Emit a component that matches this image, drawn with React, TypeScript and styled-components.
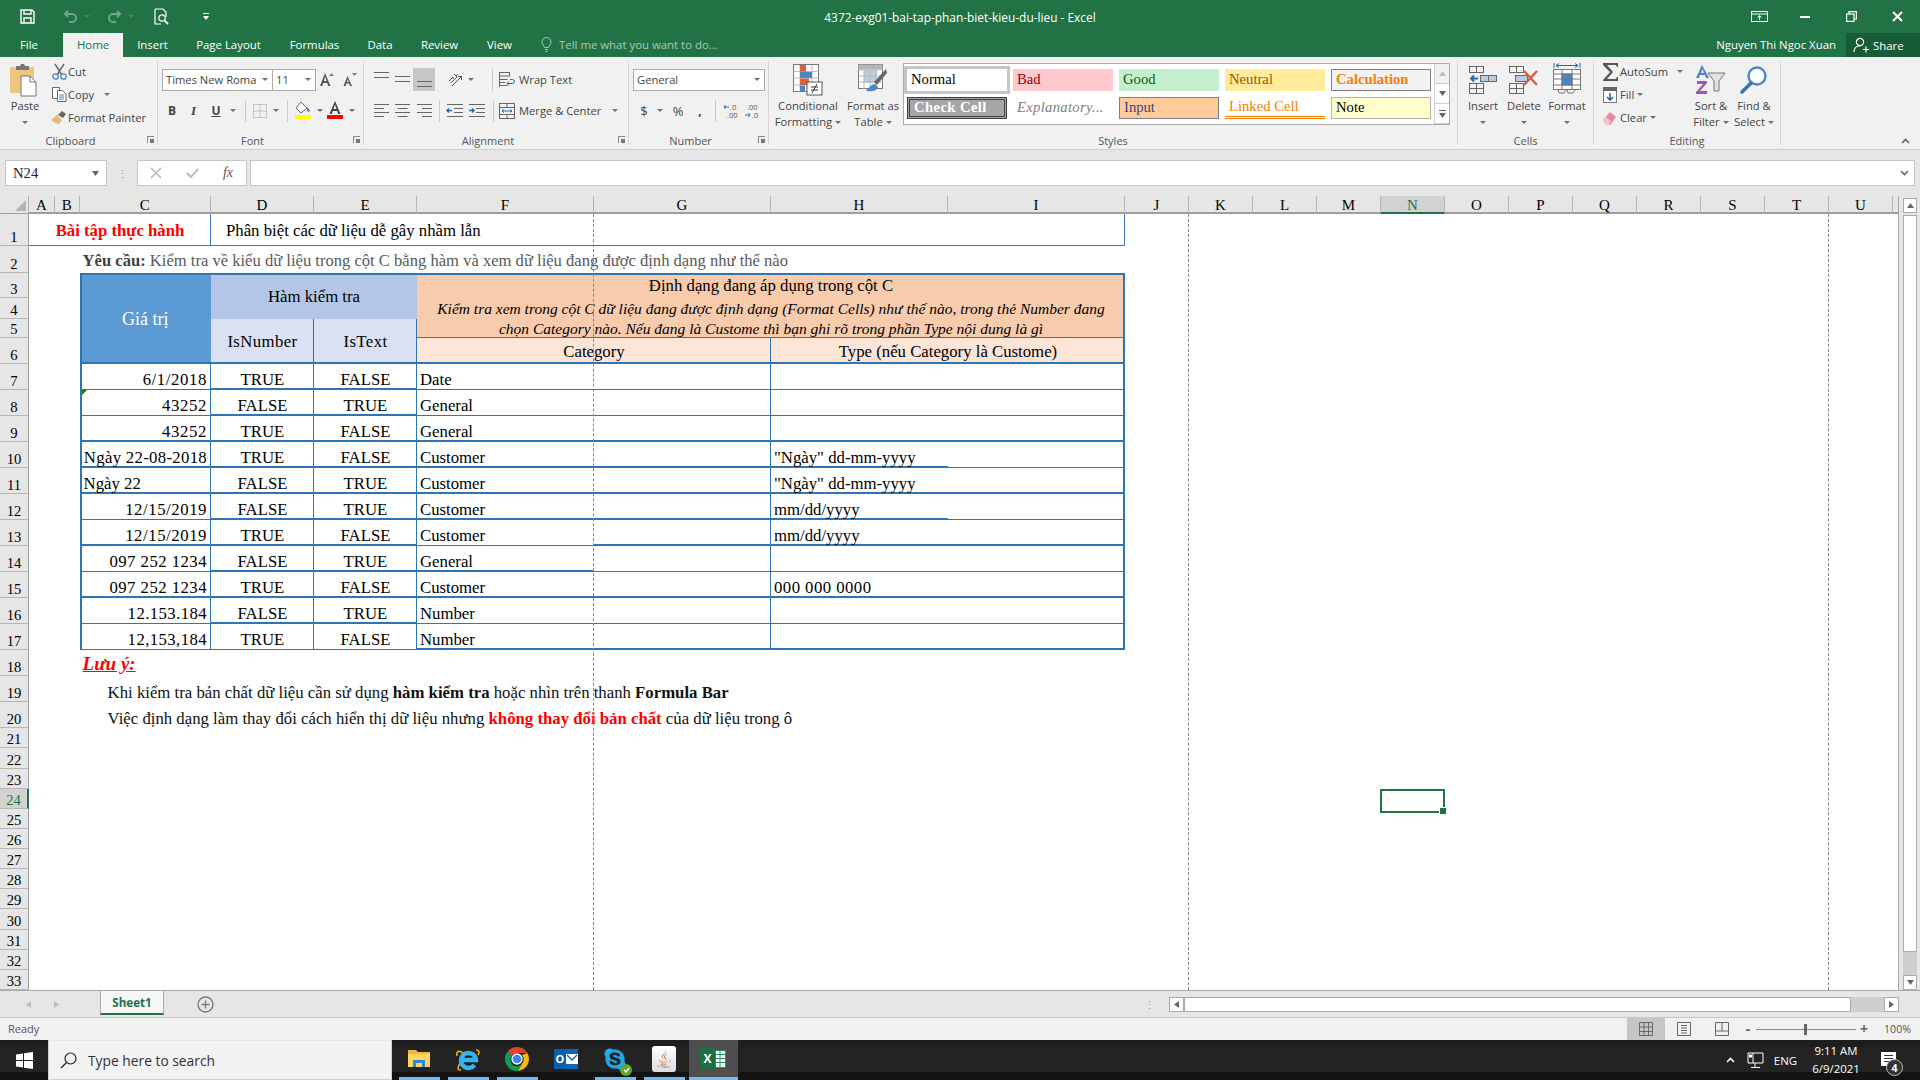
import React from 'react';
import styled, { createGlobalStyle } from 'styled-components';
import { FaSkype, FaJava } from 'react-icons/fa';

const UI = `"Open Sans", "Noto Sans", sans-serif`;
const SERIF = `"Liberation Serif", "Times New Roman", serif`;
const GREEN = '#217346';
const BLUE = '#2e75b6';

const Global = createGlobalStyle`
  html, body { margin: 0; width: 1920px; height: 1080px; overflow: hidden; background: #fff; }
  * { box-sizing: border-box; }
  svg { display: block; overflow: visible; }
`;

const Page = styled.div`
  width: 1920px; height: 1080px; display: flex; flex-direction: column;
  font-family: ${UI}; font-size: 11.2px; color: #444;
`;

/* ---------- title bar ---------- */
const TitleBar = styled.div`
  height: 33px; background: ${GREEN}; display: grid; grid-template-columns: 1fr auto 1fr; align-items: center; color: #fff;
`;
const Qat = styled.div`display: flex; align-items: center; padding-left: 16px;`;
const Slot = styled.div<{ $w: number; $on?: boolean }>`
  width: ${p => p.$w}px; flex: none; display: flex; align-items: center; justify-content: center;
  ${p => p.$on ? 'background:#c6c6c6; height:23px;' : ''}
`;
const WindowTitle = styled.div`font-size: 11.9px;`;
const WinBtns = styled.div`display: flex; justify-content: flex-end; align-items: center;`;

const TabsBar = styled.div`height: 24px; background: ${GREEN}; display: flex; color: #fff; font-size: 11.4px;`;
const Tab = styled.div<{ $w: number; $active?: boolean }>`
  width: ${p => p.$w}px; display: flex; align-items: center; justify-content: center; padding-bottom: 1px;
  ${p => p.$active ? `background:#f1f1f1; color:${GREEN};` : ''}
`;
const TellMe = styled.div`margin-left: 15px; display: flex; align-items: center; gap: 7px; color: #a6c9b6; padding-bottom: 1px;`;
const TabsRight = styled.div`margin-left: auto; display: flex; align-items: center;`;
const UserName = styled.div`margin-right: 10px; padding-bottom: 1px;`;
const ShareBtn = styled.div`
  width: 74px; height: 24px; background: #185c37; display: flex; align-items: center; padding-left: 7px; gap: 4px;
`;

/* ---------- ribbon ---------- */
const Ribbon = styled.div`height: 93px; background: #f1f1f1; display: flex; border-bottom: 1px solid #cfcfcf;`;
const Group = styled.div<{ $w: number }>`
  width: ${p => p.$w}px; flex: none; height: 84px; margin-top: 4px; border-right: 1px solid #d4d4d4; display: flex; flex-direction: column;
`;
const GroupBody = styled.div<{ $pl?: number }>`flex: 1; display: flex; padding-left: ${p => p.$pl ?? 0}px; min-height: 0;`;
const GroupFoot = styled.div<{ $launch?: boolean }>`
  height: 14px; flex: none; display: flex; align-items: center; justify-content: center; position: relative; color: #555; font-size: 11px;
  margin-bottom: -2px; padding-right: ${p => p.$launch ? 16 : 0}px;
`;
const Launcher = styled.div`
  position: absolute; right: 3px; top: 3px; width: 7px; height: 7px; border: 1px solid #8a8a8a; border-width: 1px 0 0 1px;
  &::after { content: ''; position: absolute; right: 0; bottom: 0; width: 4px; height: 4px; background: #777; }
`;
const Large = styled.div<{ $w: number }>`width: ${p => p.$w}px; flex: none; display: flex; flex-direction: column; align-items: center;`;
const LargeIcon = styled.div`height: 37px; display: flex; align-items: center; justify-content: center;`;
const LargeText = styled.div`line-height: 16px; height: 16px; display: flex; align-items: center; gap: 3px; white-space: nowrap;`;
const Caret = styled.span`
  display: inline-block; flex: none; width: 0; height: 0; border-left: 3px solid transparent; border-right: 3px solid transparent; border-top: 3px solid #6f6f6f;
`;
const SmallCol = styled.div<{ $w?: number }>`${p => p.$w ? `width:${p.$w}px;flex:none;` : ''} display: flex; flex-direction: column; margin-top: -1px;`;
const SmallRow = styled.div`height: 23px; display: flex; align-items: center; white-space: nowrap;`;
const Gap = styled.span<{ $w: number }>`display: block; flex: none; width: ${p => p.$w}px;`;
const TwoRows = styled.div`display: flex; flex-direction: column; padding-top: 7px;`;
const ToolRow = styled.div`height: 23px; display: flex; align-items: center; margin-bottom: 8px; white-space: nowrap;`;
const Combo = styled.div<{ $w: number }>`
  width: ${p => p.$w}px; height: 22px; flex: none; background: #fff; border: 1px solid #ababab; display: flex; align-items: center; justify-content: space-between; padding: 0 4px 0 3px; margin-right: -1px;
`;
const Sep = styled.div`width: 1px; height: 22px; background: #c8c8c8;`;
const BoldMark = styled.span`font-weight: 700; font-size: 12px; color: #444;`;
const PlainMark = styled.span`font-size: 13px; color: #444;`;
const ItalicMark = styled.span`font-family: ${SERIF}; font-style: italic; font-weight: 700; font-size: 13px;`;
const UnderMark = styled.span`font-weight: 700; font-size: 12px; text-decoration: underline;`;

const Gallery = styled.div`
  width: 547px; height: 62px; margin: 2px 0 0 -1px; display: flex; border: 1px solid #ababab; background: #fff; flex: none;
`;
const StyleGrid = styled.div`
  width: 531px; display: grid; grid-template-columns: repeat(5, 100px); grid-template-rows: 22px 22px; gap: 6px; padding: 5px 0 0 3px;
`;
const StyleCell = styled.div<{ $bg?: string; $fg: string; $bold?: boolean; $it?: boolean; $border?: string; $extra?: string }>`
  background: ${p => p.$bg ?? '#fff'}; color: ${p => p.$fg}; font-family: ${SERIF}; font-size: 14.67px; padding-bottom: 1px;
  font-weight: ${p => p.$bold ? 700 : 400}; font-style: ${p => p.$it ? 'italic' : 'normal'};
  ${p => p.$border ? `border:${p.$border};` : ''} display: flex; align-items: center; padding-left: 4px; ${p => p.$extra ?? ''}
`;
const GalleryScroll = styled.div`width: 15px; margin-left: auto; display: flex; flex-direction: column; border-left: 1px solid #d0d0d0;`;
const GalleryBtn = styled.div<{ $bg?: string }>`
  flex: 1; background: ${p => p.$bg ?? '#fff'}; display: flex; align-items: center; justify-content: center; border-bottom: 1px solid #d0d0d0;
`;
const CollapseArea = styled.div`flex: 1; display: flex; align-items: flex-end; justify-content: flex-end; padding: 0 10px 5px 0;`;

/* ---------- formula bar ---------- */
const FormulaZone = styled.div`height: 46px; background: #e6e6e6; padding-top: 10px; display: flex; align-items: flex-start;`;
const NameBox = styled.div`
  margin-left: 5px; width: 102px; height: 26px; background: #fff; border: 1px solid #c6c6c6; display: flex; align-items: center; justify-content: space-between; padding: 0 7px;
  font-family: ${SERIF}; font-size: 14.67px; color: #222;
`;
const Dots = styled.div`width: 30px; height: 26px; display: flex; align-items: center; justify-content: center; color: #999;`;
const FxBox = styled.div`
  width: 110px; height: 26px; background: #fff; border: 1px solid #c6c6c6; display: flex; align-items: center; color: #aaa;
`;
const FxMark = styled.span`font-family: ${SERIF}; font-style: italic; font-size: 14px; color: #555;`;
const FormulaInput = styled.div`
  flex: 1; margin: 0 5px 0 3px; height: 26px; background: #fff; border: 1px solid #c6c6c6; display: flex; align-items: center; justify-content: flex-end; padding-right: 5px;
`;

/* ---------- sheet ---------- */
const SheetArea = styled.div`height: 794px; display: flex; background: #e6e6e6;`;
const rowHeights = [18, 32, 26.7, 25.6, 20.3, 19.7, 26, ...Array(14).fill(26), ...Array(13).fill(20.13)];
const SheetGrid = styled.div`
  width: 1899px; height: 794px; position: relative; background: #fff; overflow: hidden; border-right: 1px solid #a8a8a8;
  display: grid; font-family: ${SERIF}; font-size: 16.75px; color: #000; line-height: 20px;
  grid-template-columns: 29px 26px 24.6px 131.4px 103px 103px 177px 177px 177px 177px repeat(12, 64px) 6px;
  grid-template-rows: ${rowHeights.map(h => h + 'px').join(' ')};
`;
const Corner = styled.div`
  grid-column: 1; grid-row: 1; background: #e6e6e6; border-right: 1px solid #b0b0b0; border-bottom: 1px solid #9e9e9e; position: relative;
  &::after { content: ''; position: absolute; right: 2px; bottom: 2px; border-left: 11px solid transparent; border-bottom: 11px solid #b4b4b4; }
`;
const ColHead = styled.div<{ $c: number; $sel?: boolean }>`
  grid-column: ${p => p.$c}; grid-row: 1; display: flex; align-items: center; justify-content: center; padding-top: 1px; font-size: 15px;
  background: ${p => p.$sel ? '#d2d2d2' : '#e6e6e6'}; color: ${p => p.$sel ? GREEN : '#000'};
  border-right: 1px solid #b5b5b5; border-bottom: ${p => p.$sel ? `2px solid ${GREEN}` : '2px solid #9e9e9e'};
`;
const RowHead = styled.div<{ $r: number; $sel?: boolean }>`
  grid-column: 1; grid-row: ${p => p.$r}; display: flex; align-items: flex-end; justify-content: center; font-size: 14.67px; line-height: 15px;
  background: ${p => p.$sel ? '#d2d2d2' : '#e6e6e6'}; color: ${p => p.$sel ? GREEN : '#000'};
  border-bottom: 1px solid #b5b5b5; border-right: ${p => p.$sel ? `2px solid ${GREEN}` : '1px solid #9e9e9e'};
`;
type CellP = {
  $c: number; $r: number; $cs?: number; $rs?: number; $bg?: string; $fg?: string; $align?: string; $v?: string; $ls?: number; $fs?: number;
  $b?: number; $rt?: number; $lf?: number; $tp?: number; $pad?: string; $edge?: string; $bold?: boolean;
};
const Cell = styled.div<CellP>`
  grid-column: ${p => p.$c} / span ${p => p.$cs ?? 1}; grid-row: ${p => p.$r} / span ${p => p.$rs ?? 1};
  background: ${p => p.$bg ?? 'transparent'}; color: ${p => p.$fg ?? '#000'}; font-weight: ${p => p.$bold ? 700 : 400};
  display: flex; align-items: ${p => p.$v ?? 'center'}; justify-content: ${p => p.$align ?? 'center'};
  letter-spacing: ${p => p.$ls ?? 0}px; ${p => p.$fs ? `font-size:${p.$fs}px;` : ''}
  text-align: center; padding: ${p => p.$pad ?? (p.$v ? '0' : '2px 0 0')}; white-space: nowrap; position: relative;
  box-shadow: inset 0 ${p => -(p.$b ?? 0)}px 0 ${p => p.$edge ?? BLUE}, inset ${p => -(p.$rt ?? 0)}px 0 0 ${p => p.$edge ?? BLUE},
    inset ${p => p.$lf ?? 0}px 0 0 ${BLUE}, inset 0 ${p => p.$tp ?? 0}px 0 ${BLUE};
`;
const HeaderNote = styled.div`font-style: italic; font-size: 15.5px; line-height: 20px; text-align: center; width: 100%;`;
const Flag = styled.div`
  position: absolute; left: 2px; top: 0; width: 0; height: 0; border-top: 5px solid #107c10; border-right: 5px solid transparent;
`;
const Strong = styled.b<{ $fg?: string }>`color: ${p => p.$fg ?? 'inherit'};`;
const Warn = styled.span`color: #ff0000; font-weight: 700; font-style: italic; text-decoration: underline; font-size: 19px;`;
const Line = styled.div<{ $c: number; $r: number; $v?: string }>`
  grid-column: ${p => p.$c} / span 12; grid-row: ${p => p.$r}; display: flex; align-items: ${p => p.$v ?? 'flex-end'}; white-space: nowrap; padding-left: 3px; color: #111;
  margin-bottom: -1px;
`;
const Requirement = styled(Line)`color: #595959; font-size: 16.58px; padding-top: 3px; margin-bottom: 0;`;
const WarnLine = styled(Line)`padding-top: 2px; margin-bottom: 0;`;
const PageBreak = styled.div<{ $x: number }>`
  position: absolute; top: 18px; bottom: 0; left: ${p => p.$x}px; width: 0; border-left: 1px dashed #858585; pointer-events: none;
`;
const Selection = styled.div`
  grid-column: 15; grid-row: 25; margin: 0 0 -4px -1px; border: 2px solid ${GREEN}; position: relative;
  &::after { content: ''; position: absolute; right: -4px; bottom: -4px; width: 6px; height: 6px; background: ${GREEN}; border: 1px solid #fff; }
`;
const VScroll = styled.div`width: 21px; padding: 2px 3px 0 4px; display: flex; flex-direction: column;`;
const ScrollBtn = styled.div<{ $w?: number }>`
  height: 15px; ${p => p.$w ? `width:${p.$w}px;` : ''} flex: none; background: #fff; border: 1px solid #ababab; display: flex; align-items: center; justify-content: center;
`;
const VThumb = styled.div`height: 737px; margin-top: 2px; background: #fff; border: 1px solid #ababab; flex: none;`;
const VTrack = styled.div`flex: 1; background: #cfcfcf;`;

/* ---------- sheet tabs ---------- */
const TabsRow = styled.div`height: 28px; background: #e6e6e6; display: flex; border-top: 1px solid #ababab; border-bottom: 1px solid #c8c8c8;`;
const NavArrows = styled.div`width: 100px; display: flex; align-items: center; padding-left: 26px; gap: 23px;`;
const SheetTab = styled.div`
  width: 64px; height: 24px; background: #f6f6f6; border: 1px solid #ababab; border-top: 0; border-bottom: 2px solid ${GREEN}; color: ${GREEN}; font-weight: 700; font-size: 11.6px;
  display: flex; align-items: center; justify-content: center;
`;
const AddSheet = styled.div`margin-left: 33px; margin-top: 5px;`;
const HScrollZone = styled.div`margin-left: auto; display: flex; align-items: flex-start; padding: 6px 21px 0 0;`;
const HThumb = styled.div`width: 667px; height: 15px; background: #fff; border: 1px solid #ababab;`;
const HTrack = styled.div`width: 33px; height: 15px; background: #cfcfcf;`;
const SplitDots = styled.div`margin: 0 14px 0 0; color: #999; display: flex; align-items: center; height: 15px;`;

/* ---------- status ---------- */
const StatusBar = styled.div`height: 22px; background: #f1f1f1; display: flex; align-items: center; padding-left: 8px; font-size: 11px; color: #555;`;
const ReadyText = styled.span`padding-bottom: 2px;`;
const StatusRight = styled.div`margin-left: auto; display: flex; align-items: center; height: 22px; padding-right: 9px;`;
const ViewBtn = styled.div<{ $on?: boolean }>`
  width: 38px; height: 22px; display: flex; align-items: center; justify-content: center; background: ${p => p.$on ? '#c6c6c6' : 'transparent'};
`;
const Zoomer = styled.div`display: flex; align-items: center; margin-left: 1px;`;
const ZoomTrack = styled.div`
  width: 100px; height: 1px; background: #8a8a8a; margin: 0 2px; position: relative;
  &::after { content: ''; position: absolute; left: 48px; top: -5px; width: 3px; height: 11px; background: #666; }
`;
const ZoomSym = styled.span`font-size: 14px; font-weight: 700; color: #666; width: 12px; text-align: center; line-height: 14px;`;
const ZoomPct = styled.span`margin-left: 14px; color: #555; font-size: 10.6px;`;

/* ---------- taskbar ---------- */
const Taskbar = styled.div`
  height: 40px; display: flex; color: #fff;
  background: linear-gradient(#1d1d1d 0 7px, #232323 7px 32px, #131313 32px);
`;
const StartBtn = styled.div`width: 48px; display: flex; align-items: center; justify-content: center;`;
const SearchBox = styled.div`
  width: 344px; background: #f2f2f2; border: 1px solid #cfcfcf; border-top-color: #e8e8e8; display: flex; align-items: center; padding-left: 11px; gap: 11px;
  color: #333; font-size: 13.8px;
`;
const TaskItems = styled.div`display: flex; margin-left: 2.5px;`;
const TaskItem = styled.div<{ $run?: boolean; $active?: boolean }>`
  width: 49px; height: 40px; position: relative; display: flex; align-items: center; justify-content: center; padding-bottom: 3px;
  background: ${p => p.$active ? '#4e4e4e' : 'transparent'};
  ${p => p.$run ? `&::after { content:''; position:absolute; left:${p.$active ? 0 : 4}px; right:${p.$active ? 0 : 4}px; bottom:0; height:3px; background:#76b9ed; }` : ''}
`;
const Tray = styled.div`margin-left: auto; display: flex; align-items: center; height: 40px; font-size: 11.4px; padding-right: 19px;`;
const TrayText = styled.div`width: 33px; text-align: right;`;
const Clock = styled.div`width: 78px; text-align: center; line-height: 18px; font-size: 11.4px;`;
const Notify = styled.div`width: 26px; position: relative; display: flex; justify-content: center; align-self: flex-start; padding-top: 12px;`;
const NotifyBadge = styled.div`
  position: absolute; left: 11px; top: 19px; width: 17px; height: 17px; border-radius: 50%; background: #333; border: 1px solid #bbb;
  display: flex; align-items: center; justify-content: center; font-size: 10.5px; font-weight: 700;
`;
const OutlookTile = styled.div`width: 24px; height: 20px; display: flex; align-items: center; background: #0a66b7;`;
const OutlookO = styled.div`
  width: 12px; height: 20px; background: #0a5fb0; color: #fff; font-weight: 700; font-size: 11px; display: flex; align-items: center; justify-content: center;
`;
const ExcelTile = styled.div`width: 26px; height: 22px; display: flex; align-items: center;`;
const ExcelX = styled.div`
  width: 15px; height: 22px; background: #1d6f42; color: #fff; font-weight: 700; font-size: 12px; display: flex; align-items: center; justify-content: center;
`;
const JavaTile = styled.div`
  width: 24px; height: 26px; background: linear-gradient(#fff, #d7dfe8); border-radius: 3px; display: flex; align-items: center; justify-content: center;
`;
const SkypeWrap = styled.div`position: relative; width: 24px; height: 24px;`;
const SkypeCheck = styled.div`
  position: absolute; right: -5px; bottom: -5px; width: 12px; height: 12px; border-radius: 50%; background: #5fa82f; display: flex; align-items: center; justify-content: center;
`;

/* ---------- icons ---------- */
type S = { c?: string };
const Save = () => <svg width="15" height="15" viewBox="0 0 15 15" fill="none" stroke="#fff" strokeWidth="1.4"><path d="M1 1h11l2 2v11H1z" /><path d="M4 1v4h7V1M4 14V9h7v5" /></svg>;
const Undo = ({ c = '#6fa58a' }: S) => <svg width="15" height="13" viewBox="0 0 15 13" fill="none" stroke={c} strokeWidth="2"><path d="M5 1 2 4l3 3M2 4h7a4 4 0 0 1 0 8H6" /></svg>;
const Redo = ({ c = '#6fa58a' }: S) => <svg width="15" height="13" viewBox="0 0 15 13" fill="none" stroke={c} strokeWidth="2"><path d="M10 1l3 3-3 3M13 4H6a4 4 0 0 0 0 8h3" /></svg>;
const Preview = () => <svg width="16" height="17" viewBox="0 0 16 17" fill="none" stroke="#fff" strokeWidth="1.2"><path d="M1 1h8l3 3v5M1 1v15h6" /><circle cx="8" cy="10" r="3.2" /><path d="m10.5 12.5 3.5 3.5" strokeWidth="1.8" /></svg>;
const QatMore = () => <svg width="6" height="7" viewBox="0 0 6 7" fill="#fff"><path d="M0 0h6v1H0zM0 3h6L3 7z" /></svg>;
const RibbonOpts = () => <svg width="17" height="11" viewBox="0 0 17 11" fill="none" stroke="#fff"><rect x=".5" y=".5" width="16" height="10" /><path d="M.5 3h16M8.5 9V5M6.5 6.5l2-2 2 2" /></svg>;
const Minimize = () => <svg width="10" height="2" viewBox="0 0 10 2"><rect width="10" height="2" fill="#fff" /></svg>;
const Restore = () => <svg width="11" height="11" viewBox="0 0 11 11" fill="none" stroke="#fff" strokeWidth="1.2"><rect x=".6" y="3" width="7.4" height="7.4" /><path d="M3 3V.7h7.4V8H8" /></svg>;
const Close = () => <svg width="11" height="11" viewBox="0 0 11 11" stroke="#fff" strokeWidth="2"><path d="m1 1 9 9M10 1l-9 9" /></svg>;
const Bulb = () => <svg width="11" height="15" viewBox="0 0 11 15" fill="none" stroke="#a6c9b6"><path d="M3.5 10.5C3 8.500 1 7.500 1 5a4.500 4.500 0 0 1 9 0c0 2.500-2 3.500-2.500 5.500zM4 12.500h3M4.500 14.500h2" /></svg>;
const Person = () => <svg width="16" height="16" viewBox="0 0 16 16" fill="none" stroke="#fff" strokeWidth="1.2"><circle cx="7" cy="5" r="3.6" /><path d="M1 15c0-4 2.500-6 6-6M10 12.500h6M13 9.500v6" /></svg>;
const PasteIc = () => <svg width="30" height="33" viewBox="0 0 30 33"><rect y="4" width="24" height="26" fill="#efc681" /><path d="M6 7V3h4l1-2h3l1 2h4v4z" fill="#777" /><path d="M11 13h9l6 6v14H11z" fill="#fff" stroke="#777" /><path d="M20 13v6h6" fill="none" stroke="#777" /></svg>;
const CutIc = () => <svg width="15" height="17" viewBox="0 0 15 17" fill="none"><path d="M3 1l7 11M12 1 5 12" stroke="#666" strokeWidth="1.4" /><circle cx="3.500" cy="13.500" r="2.700" stroke="#4a86c5" strokeWidth="1.300" /><circle cx="11.500" cy="13.500" r="2.700" stroke="#4a86c5" strokeWidth="1.300" /></svg>;
const CopyIc = () => <svg width="15" height="15" viewBox="0 0 15 15" fill="#fff" stroke="#666"><path d="M.5.500h7v11h-7z" /><path d="M5.500 3.500h5l3.500 3.500v7.500H5.500z" /><path d="M7 8h5M7 10h5M7 12h5" fill="none" stroke="#4a86c5" /></svg>;
const PainterIc = () => <svg width="16" height="15" viewBox="0 0 16 15"><path d="M0 10 6 5l5 5-3 4-4-1z" fill="#e4b877" /><path d="m7 5 4-4 4 3-3 4z" fill="#666" /></svg>;
const GrowA = ({ up }: { up: boolean }) => (
  <svg width="15" height="15" viewBox="0 0 15 15">
    <path d={up ? 'M6 1 1 14h2.200l1-3h4l1 3H11.500zM4.900 9 6.200 4.500 7.500 9z' : 'M5.500 4 1.500 14H3.500l.8-2.400h3L8 14h2zM4.900 10 5.800 7l1 3z'} fill="#555" fillRule="evenodd" />
    <path d={up ? 'M10 4l2.500-3L15 4z' : 'M10 1h5l-2.500 3z'} fill="#4a86c5" />
  </svg>
);
const AlignV = ({ y1 }: { y1: number }) => (
  <svg width="15" height="23" viewBox="0 0 15 23" stroke="#666" fill="none"><path d={`M0 ${y1 + .5}h15M0 ${y1 + 5.5}h15`} /></svg>
);
const AlignH = ({ mode }: { mode: 0 | 1 | 2 }) => {
  const short = mode === 0 ? 0 : mode === 2 ? 5 : 2.5;
  return <svg width="15" height="13" viewBox="0 0 15 13" stroke="#666" fill="none"><path d={`M0 .5h15M${short} 4.500h10M0 8.500h15M${short} 12.500h10`} /></svg>;
};
const BordersIc = () => <svg width="14" height="14" viewBox="0 0 14 14" fill="none" stroke="#999" strokeDasharray="1 1"><path d="M.5.500h13v13H.5zM7 .5v13M.5 7h13" /></svg>;
const FillIc = () => <svg width="16" height="19" viewBox="0 0 16 19"><path d="M6 1 1 7l5 5 6-5z" fill="#fff" stroke="#666" /><path d="M12 6c2 2 3 3 3 4s-3 1-3 0z" fill="#4a86c5" /><rect y="14" width="16" height="4" fill="#ffff00" /></svg>;
const ColorA = () => (
  <svg width="16" height="19" viewBox="0 0 16 19"><path d="M8 0 2.500 13h2.400l1-3h4.200l1 3h2.400zM6.500 8 8 3.500 9.500 8z" fill="#444" fillRule="evenodd" /><rect y="14" width="16" height="4" fill="#f00" /></svg>
);
const OrientIc = () => <svg width="16" height="15" viewBox="0 0 16 15" fill="none" stroke="#555"><path d="M2 9l4-4M4 11l3-3a1.500 1.500 0 0 0-2-2M7 2l3 3-2 2M9 4l2-2" /><path d="M5 14 14 5M11 4.500h3.500V8" /></svg>;
const WrapIc = () => <svg width="16" height="16" viewBox="0 0 16 16" fill="none" stroke="#666"><rect x=".5" y=".5" width="10" height="3.500" /><path d="M.5 7.500h8M.5 10.500h6M.5 13.500h8M.5 4v11" /><path d="M11 7.500h2.500a1.500 1.500 0 0 1 0 4H8M10 9.500l-2 2 2 2" stroke="#2a6ab0" /></svg>;
const MergeIc = () => <svg width="16" height="16" viewBox="0 0 16 16" fill="none" stroke="#666"><rect x=".5" y=".5" width="15" height="15" /><path d="M.5 4.500h15M.5 11.500h15M8 1v3.500M8 11.500v4" /><path d="M3 8h10M5 6.500 3 8l2 1.500M11 6.500 13 8l-2 1.500" stroke="#2a6ab0" /></svg>;
const IndentIc = ({ flip }: { flip?: boolean }) => (
  <svg width="16" height="13" viewBox="0 0 16 13" fill="none" stroke="#666"><path d="M0 .5h16M7 4.500h9M7 8.500h9M0 12.500h16" /><path d={flip ? 'M0 6.500h5M3 4.500l2 2-2 2' : 'M5 6.500H0M2 4.500l-2 2 2 2'} stroke="#2a6ab0" strokeWidth="1.500" /></svg>
);
const DecimalIc = ({ inc }: { inc?: boolean }) => (
  <svg width="16" height="16" viewBox="0 0 16 16">
    <text x={inc ? 7 : 3} y="7" fontFamily={UI} fontSize="7.500" fill="#555">{inc ? '.0' : '.00'}</text>
    <text x={inc ? 4 : 8} y="15" fontFamily={UI} fontSize="7.500" fill="#555">{inc ? '.00' : '.0'}</text>
    <path d={inc ? 'M6 4H1M2.500 2 1 4l1.500 2' : 'M1 12h5M4.500 10 6 12l-1.500 2'} stroke="#2a6ab0" fill="none" />
  </svg>
);
const GridBase = ({ children }: { children?: React.ReactNode }) => (
  <svg width="30" height="32" viewBox="0 0 30 32" fill="none">
    {children}
  </svg>
);
const CondIc = () => (
  <GridBase>
    <rect x=".5" y=".5" width="25" height="27" fill="#fff" stroke="#777" />
    <path d="M.5 7.500h25M.5 14h25M.5 21h25M7 1v27M19 1v27" stroke="#bbb" />
    <rect x="7" y="1" width="6" height="6.500" fill="#d9603b" /><rect x="7" y="8" width="12" height="6" fill="#4a86c5" /><rect x="7" y="14.500" width="9" height="6.500" fill="#d9603b" /><rect x="7" y="21.500" width="5" height="6.500" fill="#4a86c5" />
    <rect x="14" y="18" width="15" height="13" fill="#fff" stroke="#555" /><path d="M18 23h7M18 26h7M24 20l-5 9" stroke="#333" />
  </GridBase>
);
const TableIc = () => (
  <GridBase>
    <rect x=".5" y=".5" width="24" height="24" fill="#fff" stroke="#777" />
    <rect x=".5" y=".5" width="24" height="5" fill="#b5b5b5" />
    <rect x="6" y="6" width="13" height="13" fill="#b8cce4" />
    <path d="M.5 6h24M.5 12h24M.5 18h24M6 1v24M12 1v24M18 1v24" stroke="#bbb" />
    <path d="M28 5 16 18l3 3L29 9z" fill="#666" /><path d="M17 20c-4 0-5 3-9 7 5 1 11 0 12-4z" fill="#4a86c5" />
  </GridBase>
);
const InsertIc = () => <svg width="28" height="28" viewBox="0 0 28 28" fill="none" stroke="#666"><rect x=".5" y=".5" width="14" height="6" /><path d="M7.500 1v6" /><rect x=".5" y="17.500" width="14" height="10" /><path d="M7.500 18v10M1 22.500h13" /><rect x="11.500" y="9.500" width="16" height="6" fill="#b8cce4" /><path d="M19.500 10v6" /><path d="M9 12.500H2M5 9.500l-3 3 3 3" stroke="#2a6ab0" strokeWidth="2" /></svg>;
const DeleteIc = () => <svg width="30" height="28" viewBox="0 0 30 28" fill="none" stroke="#666"><rect x=".5" y=".5" width="14" height="6" /><path d="M7.500 1v6" /><rect x=".5" y="17.500" width="14" height="10" /><path d="M7.500 18v10M1 22.500h13" /><rect x="6.500" y="9.500" width="12" height="6" fill="#b8cce4" /><path d="m15 5 13 14M28 5 15 19" stroke="#d9603b" strokeWidth="2.400" /></svg>;
const FormatIc = () => <svg width="28" height="33" viewBox="0 0 28 33" fill="none" stroke="#777"><path d="M1 0v5M27 0v5M3 2.500h22M3 2.500l3-2M3 2.500l3 2M25 2.500l-3-2M25 2.500l-3 2" stroke="#2a6ab0" /><rect x=".5" y="6.500" width="27" height="20" fill="#fff" /><path d="M.5 22h27M9 7v20M19 7v20" /><rect x="9" y="11" width="10" height="11" fill="#4a86c5" /><path d="M.5 11h27M.5 16h27M5 27l1 3h5l2-3M14 27l1 3h5l2-3" /></svg>;
const SumIc = () => <svg width="17" height="18" viewBox="0 0 17 18"><path d="M1 0h15v4h-1l-1-2H5l6 7-6 7h9l1-2h1v4H1v-1l7-8-7-7z" fill="#555" /></svg>;
const FillDown = () => <svg width="14" height="16" viewBox="0 0 14 16" fill="#fff" stroke="#777"><rect x=".5" y=".5" width="13" height="15" /><rect y="0" width="14" height="4" fill="#666" stroke="none" /><path d="M7 6v7M4 10l3 3 3-3" stroke="#2a6ab0" strokeWidth="1.600" fill="none" /></svg>;
const ClearIc = () => <svg width="14" height="14" viewBox="0 0 14 14"><path d="M0 9 7 1l6 5-6 8H3z" fill="#e58a9a" /><path d="M0 9l3-3 5 4-2 4H3z" fill="#f3c2ca" /></svg>;
const SortIc = () => (
  <svg width="30" height="30" viewBox="0 0 30 30">
    <path d="M6 0 0 13h3l1-3h5l1 3h3zM5 8l1.500-4L8 8z" fill="#4a86c5" fillRule="evenodd" />
    <path d="M1 16h10v2l-7 8h7v3H0v-2l7-8H1z" fill="#9659b5" />
    <path d="M12 8h17l-6 8v10h-5V16z" fill="#e2e2e2" stroke="#777" />
  </svg>
);
const FindIc = () => <svg width="28" height="28" viewBox="0 0 28 28" fill="none"><circle cx="17" cy="10" r="8.500" stroke="#4a86c5" strokeWidth="2.400" fill="#fff" /><path d="M11 17 2 26" stroke="#3b73ad" strokeWidth="3.500" strokeLinecap="round" /></svg>;
const Chevron = ({ up, c = '#666' }: { up?: boolean; c?: string }) => <svg width="9" height="6" viewBox="0 0 9 6" fill="none" stroke={c} strokeWidth="1.600"><path d={up ? 'M1 5l3.500-3.500L8 5' : 'M1 1l3.500 3.500L8 1'} /></svg>;
const XIc = () => <svg width="10" height="10" viewBox="0 0 10 10" stroke="#b5b5b5" strokeWidth="1.400"><path d="m0 0 10 10M10 0 0 10" /></svg>;
const CheckIc = () => <svg width="13" height="10" viewBox="0 0 13 10" fill="none" stroke="#b5b5b5" strokeWidth="1.800"><path d="m1 5 4 4 7-8" /></svg>;
const Tri = ({ dir, c = '#666' }: { dir: 'u' | 'd' | 'l' | 'r'; c?: string }) => {
  const d = { u: 'M0 5 3.500 0 7 5z', d: 'M0 0h7L3.500 5z', l: 'M5 0v7L0 3.500z', r: 'M0 0v7l5-3.500z' }[dir];
  return <svg width={dir === 'l' || dir === 'r' ? 5 : 7} height={dir === 'l' || dir === 'r' ? 7 : 5}><path d={d} fill={c} /></svg>;
};
const GalleryMore = () => <svg width="7" height="8" viewBox="0 0 7 8" fill="#666"><path d="M0 0h7v1H0zM0 3h7L3.500 8z" /></svg>;
const PlusCircle = () => <svg width="17" height="17" viewBox="0 0 17 17" fill="none" stroke="#777" strokeWidth="1.300"><circle cx="8.500" cy="8.500" r="7.500" /><path d="M4.500 8.500h8M8.500 4.500v8" /></svg>;
const NormalView = () => <svg width="14" height="14" viewBox="0 0 14 14" fill="none" stroke="#666"><path d="M.5.500h13v13H.5zM.5 5h13M.5 9.500h13M5 .5v13M9.500 .5v13" /></svg>;
const PageView = () => <svg width="14" height="14" viewBox="0 0 14 14" fill="none" stroke="#666"><path d="M.5.500h13v13H.5zM4 3.500h6M4 6h6M4 8.500h6M4 11h6" /></svg>;
const BreakView = () => <svg width="14" height="14" viewBox="0 0 14 14" fill="none" stroke="#666"><path d="M.5.500h13v13H.5zM.5 9h13M7 .5V9" /></svg>;
const WinLogo = () => <svg width="17" height="17" viewBox="0 0 17 17" fill="#fff"><path d="M0 2.500 7 1.500v6.500H0zM8 1.300 17 0v8H8zM0 9h7v6.500L0 14.500zM8 9h9v8l-9-1.300z" /></svg>;
const SearchIc = () => <svg width="17" height="17" viewBox="0 0 17 17" fill="none" stroke="#222" strokeWidth="1.200"><circle cx="10.500" cy="6.500" r="5.500" /><path d="M6.500 10.500 1 16" /></svg>;
const FolderIc = () => <svg width="22" height="20" viewBox="0 0 22 20"><path d="M0 1h8l2 2h12v15H0z" fill="#f0b93a" /><path d="M0 5h22v13H0z" fill="#fcd462" /><rect x="5" y="11" width="12" height="7" fill="#2b87d3" /><rect x="8" y="14" width="6" height="4" fill="#fcd462" /></svg>;
const IeIc = () => (
  <svg width="24" height="24" viewBox="0 0 24 24" fill="none">
    <path d="M7 6C3 3 0 4 1 9M20 3c3 0 4 2 2 5M5 15c-4 6-4 8 0 8" stroke="#e8b80e" strokeWidth="1.500" />
    <path d="M6 13h14a7.500 7.500 0 1 0-1.500 5" stroke="#35b5f0" strokeWidth="4.400" />
  </svg>
);
const ChromeIc = () => (
  <svg width="24" height="24" viewBox="0 0 24 24">
    <path d="M12 0a12 12 0 0 1 10.400 6H12a6 6 0 0 0-5.500 3.600L3 4a12 12 0 0 1 9-4z" fill="#db4437" />
    <path d="M22.400 6A12 12 0 0 1 13 23.900L17 16.500A6 6 0 0 0 17 8z" fill="#fbbc05" />
    <path d="M3 4a12 12 0 0 0 10 19.900l4-7.400A6 6 0 0 1 6.500 9.600z" fill="#0f9d58" />
    <circle cx="12" cy="12" r="5" fill="#4285f4" stroke="#fff" strokeWidth="1.300" />
  </svg>
);
const EnvelopeIc = () => <svg width="12" height="10" viewBox="0 0 12 10"><rect width="12" height="10" fill="#fff" /><path d="m1 1 5 5 5-5" fill="none" stroke="#0a66b7" strokeWidth="1.400" /></svg>;
const ExcelGrid = () => <svg width="11" height="18" viewBox="0 0 11 18" fill="#fff" stroke="#2a8f58"><rect x=".5" y=".5" width="10" height="17" /><path d="M.5 4.500h10M.5 8.500h10M.5 12.500h10M5 1v17" /></svg>;
const TickIc = () => <svg width="7" height="6" viewBox="0 0 7 6" fill="none" stroke="#fff" strokeWidth="1.400"><path d="m1 3 2 2 3-4" /></svg>;
const NetIc = () => <svg width="17" height="17" viewBox="0 0 17 17" fill="none" stroke="#fff"><path d="M6 1h10v10H6M1 1h5v10H1zM8 11v4M4 15.500h9" /><rect x="2.500" y="3" width="2" height="2" /></svg>;

/* ---------- data ---------- */
const letters = 'ABCDEFGHIJKLMNOPQRSTUV'.split('');
type Row = { c: string; right: boolean; d: string; e: string; f: string; h?: string; b: string; ls: number };
const data: Row[] = [
  { c: '6/1/2018', right: true, d: 'TRUE', e: 'FALSE', f: 'Date', b: 'tTTtttt', ls: .6 },
  { c: '43252', right: true, d: 'FALSE', e: 'TRUE', f: 'General', b: 'tTTtttt', ls: .6 },
  { c: '43252', right: true, d: 'TRUE', e: 'FALSE', f: 'General', b: 'TTTTTTT', ls: .6 },
  { c: 'Ngày 22-08-2018', right: true, d: 'TRUE', e: 'FALSE', f: 'Customer', h: '"Ngày" dd-mm-yyyy', b: 'TTTTTTt', ls: .3 },
  { c: 'Ngày 22', right: false, d: 'FALSE', e: 'TRUE', f: 'Customer', h: '"Ngày" dd-mm-yyyy', b: 'TTTTTTT', ls: 0 },
  { c: '12/15/2019', right: true, d: 'FALSE', e: 'TRUE', f: 'Customer', h: 'mm/dd/yyyy', b: 'tTTTTTt', ls: .55 },
  { c: '12/15/2019', right: true, d: 'TRUE', e: 'FALSE', f: 'Customer', h: 'mm/dd/yyyy', b: 'TTTtTTT', ls: .55 },
  { c: '097 252 1234', right: true, d: 'FALSE', e: 'TRUE', f: 'General', b: 'tTTTttt', ls: .45 },
  { c: '097 252 1234', right: true, d: 'TRUE', e: 'FALSE', f: 'Customer', h: '000 000 0000', b: 'TTTTTTT', ls: .45 },
  { c: '12.153.184', right: true, d: 'FALSE', e: 'TRUE', f: 'Number', b: 'tTTtttt', ls: .4 },
  { c: '12,153,184', right: true, d: 'TRUE', e: 'FALSE', f: 'Number', b: 'tttTTTT', ls: .4 },
];
const w = (s: string, i: number) => (s[i] === 'T' ? 2 : 1);

const App = () => (
  <Page>
    <Global />
    <TitleBar>
      <Qat>
        <Slot $w={22}><Save /></Slot>
        <Gap $w={21} /><Slot $w={22}><Undo /></Slot><Slot $w={11}><Caret /></Slot>
        <Gap $w={11} /><Slot $w={22}><Redo /></Slot><Slot $w={11}><Caret /></Slot>
        <Gap $w={15} /><Slot $w={22}><Preview /></Slot>
        <Gap $w={26} /><Slot $w={14}><QatMore /></Slot>
      </Qat>
      <WindowTitle>4372-exg01-bai-tap-phan-biet-kieu-du-lieu - Excel</WindowTitle>
      <WinBtns>
        <Slot $w={46}><RibbonOpts /></Slot>
        <Slot $w={46}><Minimize /></Slot>
        <Slot $w={46}><Restore /></Slot>
        <Slot $w={46}><Close /></Slot>
      </WinBtns>
    </TitleBar>
    <TabsBar>
      <Tab $w={58}>File</Tab><Gap $w={5} />
      <Tab $w={60} $active>Home</Tab>
      <Tab $w={59}>Insert</Tab>
      <Tab $w={93}>Page Layout</Tab>
      <Tab $w={79}>Formulas</Tab>
      <Tab $w={52}>Data</Tab>
      <Tab $w={67}>Review</Tab>
      <Tab $w={53}>View</Tab>
      <TellMe><Bulb />Tell me what you want to do...</TellMe>
      <TabsRight>
        <UserName>Nguyen Thi Ngoc Xuan</UserName>
        <ShareBtn><Person />Share</ShareBtn>
      </TabsRight>
    </TabsBar>

    <Ribbon>
      <Group $w={158}>
        <GroupBody>
          <Large $w={50}>
            <LargeIcon><PasteIc /></LargeIcon>
            <LargeText>Paste</LargeText>
            <LargeText><Caret /></LargeText>
          </Large>
          <SmallCol>
            <SmallRow><Slot $w={18}><CutIc /></Slot>Cut</SmallRow>
            <SmallRow><Slot $w={18}><CopyIc /></Slot>Copy<Gap $w={10} /><Caret /></SmallRow>
            <SmallRow><Slot $w={18}><PainterIc /></Slot>Format Painter</SmallRow>
          </SmallCol>
        </GroupBody>
        <GroupFoot $launch>Clipboard<Launcher /></GroupFoot>
      </Group>

      <Group $w={206}>
        <GroupBody $pl={4}>
          <TwoRows>
            <ToolRow>
              <Combo $w={111}>Times New Roma<Caret /></Combo>
              <Combo $w={44}>11<Caret /></Combo>
              <Slot $w={22}><GrowA up /></Slot>
              <Slot $w={24}><GrowA up={false} /></Slot>
            </ToolRow>
            <ToolRow>
              <Slot $w={20}><BoldMark>B</BoldMark></Slot>
              <Slot $w={23}><ItalicMark>I</ItalicMark></Slot>
              <Slot $w={22}><UnderMark>U</UnderMark></Slot>
              <Slot $w={12}><Caret /></Slot>
              <Slot $w={12}><Sep /></Slot>
              <Slot $w={18}><BordersIc /></Slot>
              <Slot $w={14}><Caret /></Slot>
              <Slot $w={8}><Sep /></Slot>
              <Slot $w={24}><FillIc /></Slot>
              <Slot $w={10}><Caret /></Slot>
              <Slot $w={20}><ColorA /></Slot>
              <Slot $w={14}><Caret /></Slot>
            </ToolRow>
          </TwoRows>
        </GroupBody>
        <GroupFoot $launch>Font<Launcher /></GroupFoot>
      </Group>

      <Group $w={265}>
        <GroupBody $pl={6}>
          <TwoRows>
            <ToolRow>
              <Slot $w={22}><AlignV y1={4} /></Slot>
              <Slot $w={21}><AlignV y1={8} /></Slot>
              <Slot $w={22} $on><AlignV y1={13} /></Slot>
              <Gap $w={7} /><Slot $w={26}><OrientIc /></Slot><Slot $w={6}><Caret /></Slot>
              <Gap $w={12} /><Slot $w={12}><Sep /></Slot>
              <Slot $w={18}><WrapIc /></Slot><Gap $w={3} />Wrap Text
            </ToolRow>
            <ToolRow>
              <Slot $w={22}><AlignH mode={0} /></Slot>
              <Slot $w={21}><AlignH mode={1} /></Slot>
              <Slot $w={22}><AlignH mode={2} /></Slot>
              <Slot $w={9}><Sep /></Slot>
              <Slot $w={22}><IndentIc /></Slot>
              <Slot $w={22}><IndentIc flip /></Slot>
              <Slot $w={10}><Sep /></Slot>
              <Slot $w={18}><MergeIc /></Slot><Gap $w={3} />Merge &amp; Center<Gap $w={11} /><Caret />
            </ToolRow>
          </TwoRows>
        </GroupBody>
        <GroupFoot $launch>Alignment<Launcher /></GroupFoot>
      </Group>

      <Group $w={140}>
        <GroupBody $pl={4}>
          <TwoRows>
            <ToolRow><Combo $w={132}>General<Caret /></Combo></ToolRow>
            <ToolRow>
              <Slot $w={22}><PlainMark>$</PlainMark></Slot>
              <Slot $w={10}><Caret /></Slot>
              <Slot $w={26}><PlainMark>%</PlainMark></Slot>
              <Slot $w={18}><BoldMark>,</BoldMark></Slot>
              <Slot $w={12}><Sep /></Slot>
              <Slot $w={20}><DecimalIc inc /></Slot>
              <Slot $w={22}><DecimalIc /></Slot>
            </ToolRow>
          </TwoRows>
        </GroupBody>
        <GroupFoot $launch>Number<Launcher /></GroupFoot>
      </Group>

      <Group $w={689}>
        <GroupBody $pl={5}>
          <Large $w={68}>
            <LargeIcon><CondIc /></LargeIcon>
            <LargeText>Conditional</LargeText>
            <LargeText>Formatting<Caret /></LargeText>
          </Large>
          <Large $w={62}>
            <LargeIcon><TableIc /></LargeIcon>
            <LargeText>Format as</LargeText>
            <LargeText>Table<Caret /></LargeText>
          </Large>
          <Gallery>
            <StyleGrid>
              <StyleCell $fg="#000" $extra="box-shadow: 0 0 0 3px #c6c6c6;">Normal</StyleCell>
              <StyleCell $bg="#ffc7ce" $fg="#9c0006">Bad</StyleCell>
              <StyleCell $bg="#c6efce" $fg="#006100">Good</StyleCell>
              <StyleCell $bg="#ffeb9c" $fg="#9c5700">Neutral</StyleCell>
              <StyleCell $bg="#f2f2f2" $fg="#fa7d00" $bold $border="1px solid #7f7f7f">Calculation</StyleCell>
              <StyleCell $bg="#a5a5a5" $fg="#fff" $bold $border="3px double #3f3f3f" $extra="letter-spacing: .4px;">Check Cell</StyleCell>
              <StyleCell $fg="#7f7f7f" $it $extra="letter-spacing: .3px;">Explanatory...</StyleCell>
              <StyleCell $bg="#ffcc99" $fg="#3f3f76" $border="1px solid #7f7f7f">Input</StyleCell>
              <StyleCell $fg="#fa7d00" $extra="border-bottom: 3px double #fa7d00;">Linked Cell</StyleCell>
              <StyleCell $bg="#ffffcc" $fg="#000" $border="1px solid #b2b2b2">Note</StyleCell>
            </StyleGrid>
            <GalleryScroll>
              <GalleryBtn $bg="#f1f1f1"><Tri dir="u" c="#bbb" /></GalleryBtn>
              <GalleryBtn><Tri dir="d" /></GalleryBtn>
              <GalleryBtn><GalleryMore /></GalleryBtn>
            </GalleryScroll>
          </Gallery>
        </GroupBody>
        <GroupFoot>Styles</GroupFoot>
      </Group>

      <Group $w={136}>
        <GroupBody $pl={5}>
          <Large $w={40}><LargeIcon><InsertIc /></LargeIcon><LargeText>Insert</LargeText><LargeText><Caret /></LargeText></Large>
          <Large $w={42}><LargeIcon><DeleteIc /></LargeIcon><LargeText>Delete</LargeText><LargeText><Caret /></LargeText></Large>
          <Large $w={44}><LargeIcon><FormatIc /></LargeIcon><LargeText>Format</LargeText><LargeText><Caret /></LargeText></Large>
        </GroupBody>
        <GroupFoot>Cells</GroupFoot>
      </Group>

      <Group $w={187}>
        <GroupBody $pl={6}>
          <SmallCol $w={91}>
            <SmallRow><Slot $w={20}><SumIc /></Slot>AutoSum<Gap $w={9} /><Caret /></SmallRow>
            <SmallRow><Slot $w={20}><FillDown /></Slot>Fill<Gap $w={3} /><Caret /></SmallRow>
            <SmallRow><Slot $w={20}><ClearIc /></Slot>Clear<Gap $w={3} /><Caret /></SmallRow>
          </SmallCol>
          <Large $w={40}><LargeIcon><SortIc /></LargeIcon><LargeText>Sort &amp;</LargeText><LargeText>Filter<Caret /></LargeText></Large>
          <Large $w={46}><LargeIcon><FindIc /></LargeIcon><LargeText>Find &amp;</LargeText><LargeText>Select<Caret /></LargeText></Large>
        </GroupBody>
        <GroupFoot>Editing</GroupFoot>
      </Group>
      <CollapseArea><Chevron up /></CollapseArea>
    </Ribbon>

    <FormulaZone>
      <NameBox>N24<Tri dir="d" /></NameBox>
      <Dots>⋮</Dots>
      <FxBox>
        <Slot $w={36}><XIc /></Slot>
        <Slot $w={36}><CheckIc /></Slot>
        <Slot $w={36}><FxMark>fx</FxMark></Slot>
      </FxBox>
      <FormulaInput><Chevron /></FormulaInput>
    </FormulaZone>

    <SheetArea>
      <SheetGrid>
        <Corner />
        {letters.map((l, i) => <ColHead key={l} $c={i + 2} $sel={l === 'N'}>{l === 'V' ? '' : l}</ColHead>)}
        {Array.from({ length: 33 }, (_, i) => <RowHead key={i} $r={i + 2} $sel={i === 23}>{i + 1}</RowHead>)}

        <Cell $c={2} $r={2} $cs={3} $fg="#ff0000" $bold $b={1} $rt={1} $edge="#3f75c0">Bài tập thực hành</Cell>
        <Cell $c={5} $r={2} $cs={6} $align="flex-start" $pad="2px 0 0 15px" $b={1} $rt={1} $edge="#3f75c0">Phân biệt các dữ liệu dễ gây nhầm lẫn</Cell>
        <Requirement $c={4} $r={3} $v="center"><Strong $fg="#404040">Yêu cầu:</Strong>&nbsp;Kiểm tra về kiểu dữ liệu trong cột C bằng hàm và xem dữ liệu đang được định dạng như thế nào</Requirement>

        <Cell $c={4} $r={4} $rs={4} $bg="#5b9bd5" $fg="#fff" $fs={18} $lf={2} $tp={2} $b={2}>Giá trị</Cell>
        <Cell $c={5} $r={4} $cs={2} $rs={2} $bg="#b4c6e7" $tp={2}>Hàm kiểm tra</Cell>
        <Cell $c={5} $r={6} $rs={2} $bg="#d9e1f2" $b={2} $rt={1} $ls={.4}>IsNumber</Cell>
        <Cell $c={6} $r={6} $rs={2} $bg="#d9e1f2" $b={2} $rt={1} $ls={.4}>IsText</Cell>
        <Cell $c={7} $r={4} $cs={4} $bg="#f8cbad" $rt={2} $tp={2}>Định dạng đang áp dụng trong cột C</Cell>
        <Cell $c={7} $r={5} $cs={4} $rs={2} $bg="#f8cbad" $rt={2} $b={1}>
          <HeaderNote>Kiểm tra xem trong cột C dữ liệu đang được định dạng (Format Cells) như thế nào, trong thẻ Number đang<br />chọn Category nào. Nếu đang là Custome thì bạn ghi rõ trong phần Type nội dung là gì</HeaderNote>
        </Cell>
        <Cell $c={7} $r={7} $cs={2} $bg="#fce4d6" $b={2} $rt={1}>Category</Cell>
        <Cell $c={9} $r={7} $cs={2} $bg="#fce4d6" $b={2} $rt={2}>Type (nếu Category là Custome)</Cell>

        {data.map((r, i) => {
          const row = i + 8;
          return (
            <React.Fragment key={i}>
              <Cell $c={4} $r={row} $v="flex-end" $ls={r.ls} $align={r.right ? 'flex-end' : 'flex-start'} $pad={r.right ? '0 4px 0 0' : '0 0 0 4px'} $lf={2} $rt={1} $b={w(r.b, 0)}>
                {i === 1 && <Flag />}{r.c}
              </Cell>
              <Cell $c={5} $r={row} $v="flex-end" $rt={1} $b={w(r.b, 1)}>{r.d}</Cell>
              <Cell $c={6} $r={row} $v="flex-end" $rt={1} $b={w(r.b, 2)}>{r.e}</Cell>
              <Cell $c={7} $r={row} $v="flex-end" $align="flex-start" $pad="0 0 0 3px" $b={w(r.b, 3)}>{r.f}</Cell>
              <Cell $c={8} $r={row} $rt={1} $b={w(r.b, 4)} />
              <Cell $c={9} $r={row} $v="flex-end" $align="flex-start" $pad="0 0 0 3px" $ls={r.h === '000 000 0000' ? .45 : 0} $b={w(r.b, 5)}>{r.h}</Cell>
              <Cell $c={10} $r={row} $rt={2} $b={w(r.b, 6)} />
            </React.Fragment>
          );
        })}

        <WarnLine $c={4} $r={19} $v="center"><Warn>Lưu ý:</Warn></WarnLine>
        <Line $c={4} $r={20}><Gap $w={25} /><span>Khi kiểm tra bản chất dữ liệu cần sử dụng&nbsp;<Strong>hàm kiểm tra</Strong>&nbsp;hoặc nhìn trên thanh&nbsp;<Strong>Formula Bar</Strong></span></Line>
        <Line $c={4} $r={21}><Gap $w={25} /><span>Việc định dạng làm thay đổi cách hiển thị dữ liệu nhưng&nbsp;<Strong $fg="#ff0000">không thay đổi bản chất</Strong>&nbsp;của dữ liệu trong ô</span></Line>

        <Selection />
        <PageBreak $x={593} />
        <PageBreak $x={1188} />
        <PageBreak $x={1828} />
      </SheetGrid>
      <VScroll>
        <ScrollBtn><Tri dir="u" /></ScrollBtn>
        <VThumb />
        <VTrack />
        <ScrollBtn><Tri dir="d" /></ScrollBtn>
      </VScroll>
    </SheetArea>

    <TabsRow>
      <NavArrows><Tri dir="l" c="#bdbdbd" /><Tri dir="r" c="#bdbdbd" /></NavArrows>
      <SheetTab>Sheet1</SheetTab>
      <AddSheet><PlusCircle /></AddSheet>
      <HScrollZone>
        <SplitDots>⋮</SplitDots>
        <ScrollBtn $w={15}><Tri dir="l" /></ScrollBtn>
        <HThumb />
        <HTrack />
        <ScrollBtn $w={15}><Tri dir="r" /></ScrollBtn>
      </HScrollZone>
    </TabsRow>

    <StatusBar>
      <ReadyText>Ready</ReadyText>
      <StatusRight>
        <ViewBtn $on><NormalView /></ViewBtn>
        <ViewBtn><PageView /></ViewBtn>
        <ViewBtn><BreakView /></ViewBtn>
        <Zoomer>
          <ZoomSym>-</ZoomSym><ZoomTrack /><ZoomSym>+</ZoomSym>
        </Zoomer>
        <ZoomPct>100%</ZoomPct>
      </StatusRight>
    </StatusBar>

    <Taskbar>
      <StartBtn><WinLogo /></StartBtn>
      <SearchBox><SearchIc />Type here to search</SearchBox>
      <TaskItems>
        <TaskItem $run><FolderIc /></TaskItem>
        <TaskItem $run><IeIc /></TaskItem>
        <TaskItem $run><ChromeIc /></TaskItem>
        <TaskItem><OutlookTile><OutlookO>O</OutlookO><EnvelopeIc /></OutlookTile></TaskItem>
        <TaskItem $run><SkypeWrap><FaSkype size={24} color="#1fa9e8" /><SkypeCheck><TickIc /></SkypeCheck></SkypeWrap></TaskItem>
        <TaskItem $run><JavaTile><FaJava size={18} color="#d9713b" /></JavaTile></TaskItem>
        <TaskItem $run $active><ExcelTile><ExcelX>X</ExcelX><ExcelGrid /></ExcelTile></TaskItem>
      </TaskItems>
      <Tray>
        <Chevron up c="#fff" />
        <Gap $w={12} /><NetIc />
        <TrayText>ENG</TrayText>
        <Clock>9:11 AM<br />6/9/2021</Clock>
        <Notify>
          <svg width="15" height="14" viewBox="0 0 15 14" fill="#fff"><path d="M0 0h15v14H0z" /><path d="M3 3.500h9M3 6.500h9M3 9.500h9" stroke="#333" /></svg>
          <NotifyBadge>4</NotifyBadge>
        </Notify>
      </Tray>
    </Taskbar>
  </Page>
);

export default App;
